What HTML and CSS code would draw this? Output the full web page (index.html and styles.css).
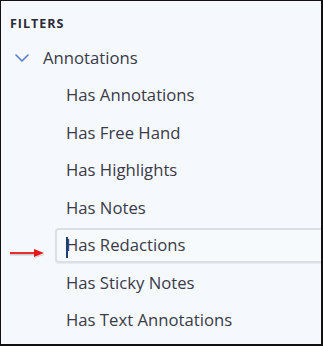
FILE: index.html
```html
<!DOCTYPE html>
<html>
<head>
<meta charset="utf-8">
<link rel="stylesheet" href="styles.css">
</head>
<body>
<div class="panel">
  <div class="title">FILTERS</div>
  <div class="row group">
    <svg class="chev" width="14" height="8" viewBox="0 0 14 8"><path d="M1 1 L7 7 L13 1" fill="none" stroke="#5b7cc6" stroke-width="1.6" stroke-linecap="round" stroke-linejoin="round"/></svg>
    <span>Annotations</span>
  </div>
  <ul class="items">
    <li class="row item">Has Annotations</li>
    <li class="row item">Has Free Hand</li>
    <li class="row item">Has Highlights</li>
    <li class="row item">Has Notes</li>
    <li class="row item selected"><span class="caret"></span>Has Redactions
      <svg class="arrow" width="40" height="12" viewBox="0 0 40 12"><path d="M1 7.5 L30 7.5" stroke="#9a9a9a" stroke-opacity="0.45" stroke-width="2"/><path d="M1 6 L30 6" stroke="#e8151b" stroke-width="1.8"/><path d="M25 2 L35 6 L25 10 Z" fill="#e8151b"/><path d="M25 10 L35 7 L35 8 L26 11 Z" fill="#9a9a9a" fill-opacity="0.4"/></svg>
    </li>
    <li class="row item">Has Sticky Notes</li>
    <li class="row item">Has Text Annotations</li>
  </ul>
</div>
</body>
</html>
```

FILE: styles.css
```css
* { box-sizing: border-box; }
html, body { margin: 0; padding: 0; }
body { width: 323px; height: 346px; overflow: hidden; background: #fff; }
.panel {
  width: 323px;
  height: 346px;
  border-style: solid;
  border-color: #111;
  border-width: 1px 2px 2px 1px;
  background: #f5f9fd;
  font-family: "Open Sans", "Noto Sans", sans-serif;
  color: #3a3a48;
  overflow: hidden;
  padding-top: 15px;
}
.title {
  font-size: 12.5px;
  font-weight: 700;
  letter-spacing: 1px;
  color: #2a2a3a;
  line-height: 16px;
  height: 16px;
  padding-left: 9px;
  margin-bottom: 7px;
}
.row {
  height: 37.5px;
  display: flex;
  align-items: center;
  font-size: 16.7px;
  line-height: 20px;
}
.group { padding-left: 14px; }
.chev { margin-right: 14px; margin-top: 1px; }
.items { list-style: none; margin: 0; padding: 0; }
.item {
  position: relative;
  margin-left: 54px;
  margin-right: -6px;
  padding-left: 9px;
  border: 2px solid transparent;
}
.selected {
  border-color: #dcdfe3;
  border-radius: 4px;
  background: #f7fafd;
  box-shadow: 0 1px 1px rgba(0,0,0,0.06);
  height: 35.5px;
  margin-top: 1px;
  margin-bottom: 1px;
}
.caret {
  position: absolute;
  left: 9px;
  top: 7px;
  width: 2px;
  height: 21px;
  background: #1f3d6e;
}
.arrow {
  position: absolute;
  left: -48px;
  top: 17px;
}
```
